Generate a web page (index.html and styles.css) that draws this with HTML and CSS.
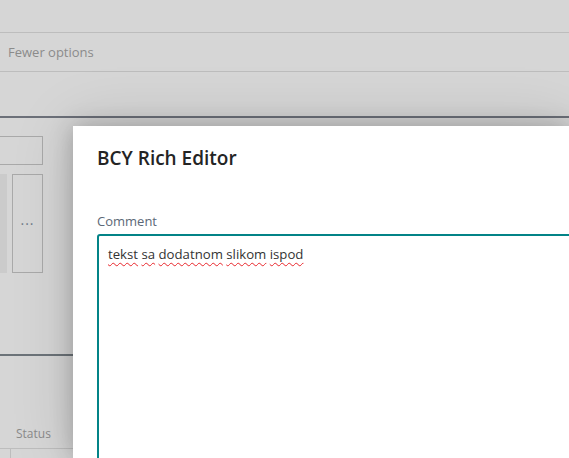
FILE: index.html
```html
<!DOCTYPE html>
<html>
<head>
<meta charset="utf-8">
<link rel="stylesheet" href="styles.css">
</head>
<body>
<div class="page">
  <div class="topbar"></div>
  <div class="options-row"><span class="options-text">Fewer options</span></div>
  <div class="band"></div>
  <div class="content">
    <div class="search-box"></div>
    <div class="tiles">
      <div class="tile-fill"></div>
      <div class="tile-more"><span class="dots">···</span></div>
    </div>
    <div class="divider"></div>
    <div class="table-head"><span class="status">Status</span></div>
    <div class="table-row"><div class="cell-first"></div></div>
  </div>
</div>

<div class="dialog">
  <h1 class="dialog-title">BCY Rich Editor</h1>
  <div class="field">
    <label class="field-label">Comment</label>
    <div class="editor">
      <p class="editor-text"><span class="sp">tekst</span> <span class="sp">sa</span> <span class="sp">dodatnom</span> <span class="sp">slikom</span> <span class="sp">ispod</span></p>
    </div>
  </div>
</div>
</body>
</html>
```
FILE: styles.css
```css
html, body {
  margin: 0;
  padding: 0;
  width: 569px;
  height: 458px;
  overflow: hidden;
  background: #d6d6d6;
  font-family: "Open Sans", "Noto Sans", sans-serif;
}

.page {
  display: flex;
  flex-direction: column;
  height: 458px;
  overflow: hidden;
}

.topbar {
  height: 32px;
  border-bottom: 1px solid #bdbdbd;
}

.options-row {
  height: 38px;
  border-bottom: 1px solid #bdbdbd;
  display: flex;
  align-items: center;
  padding-left: 8px;
}

.options-text {
  font-size: 13px;
  color: #8b8b8b;
}

.band {
  height: 44px;
  border-bottom: 2px solid #6c7079;
}

.content {
  flex: 1;
  display: flex;
  flex-direction: column;
  padding-top: 18px;
  min-height: 0;
}

.search-box {
  width: 42px;
  height: 27px;
  border: 1px solid #a9a9a9;
  border-left: none;
}

.tiles {
  display: flex;
  gap: 5px;
  margin-top: 9px;
  height: 99px;
}

.tile-fill {
  width: 7px;
  background: #cbcbcb;
}

.tile-more {
  width: 29px;
  border: 1px solid #a9a9a9;
  display: flex;
  align-items: center;
  justify-content: center;
}

.dots {
  font-size: 14px;
  color: #6f7a88;
  letter-spacing: 1px;
}

.divider {
  margin-top: 81px;
  height: 0;
  border-top: 2px solid #6c7379;
}

.table-head {
  height: 92px;
  display: flex;
  align-items: flex-end;
  padding-left: 16px;
  box-sizing: border-box;
  padding-bottom: 6px;
}

.status {
  font-size: 12px;
  color: #8a8a8a;
}

.table-row {
  border-top: 1px solid #bdbdbd;
  flex: 1;
}

.cell-first {
  width: 10px;
  height: 100%;
  border-right: 1px solid #bdbdbd;
}

.dialog {
  position: absolute;
  left: 73px;
  top: 126px;
  width: 496px;
  height: 332px;
  overflow: hidden;
  background: #ffffff;
  box-shadow: 0 0 22px rgba(0, 0, 0, 0.22), 0 0 60px rgba(0, 0, 0, 0.14);
  padding: 0 0 0 24px;
  box-sizing: border-box;
}

.dialog-title {
  margin: 0;
  padding-top: 18px;
  font-size: 19px;
  font-weight: 600;
  color: #242424;
  line-height: 28px;
}

.field {
  margin-top: 40px;
  width: 560px;
}

.field-label {
  display: block;
  font-size: 13px;
  color: #5c6877;
  line-height: 18px;
}

.editor {
  margin-top: 4px;
  border: 2px solid #038387;
  border-radius: 3px;
  height: 300px;
  padding: 8px 9px;
}

.editor-text {
  margin: 0;
  font-size: 13.2px;
  color: #333333;
  line-height: 20px;
}

.sp {
  text-decoration: underline wavy #e8262b;
  text-decoration-thickness: 1.3px;
  text-underline-offset: 3px;
}
```
